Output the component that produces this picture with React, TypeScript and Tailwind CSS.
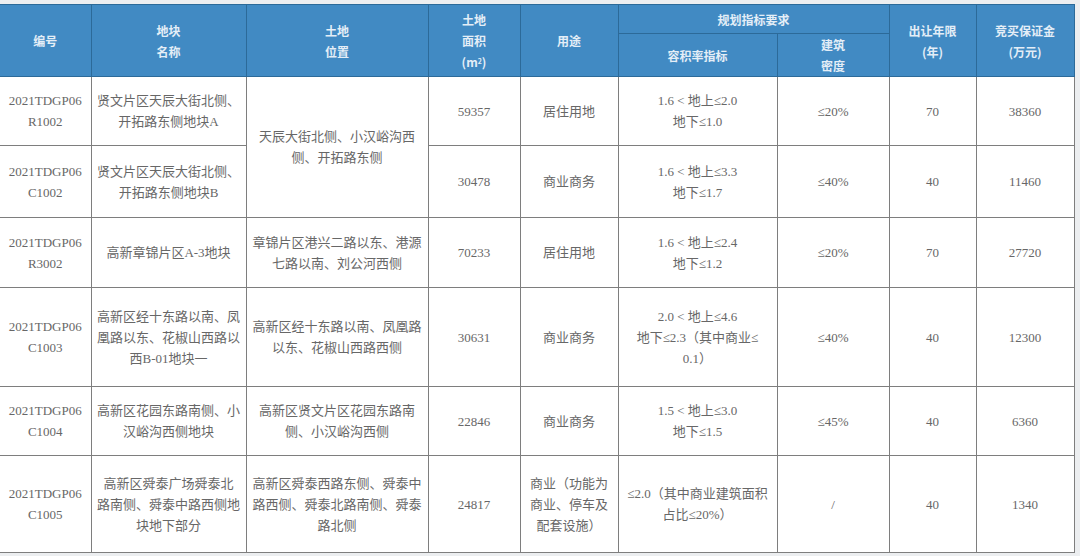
import React from "react"

type Row = {
    code: string[]
    name: string[]
    location?: string[]
    locationSpan?: number
    area: string
    use: string[]
    far: string[]
    density: string
    years: string
    deposit: string
    height: string
}

const ROWS: Row[] = [
    {
        code: ["2021TDGP06", "R1002"],
        name: ["贤文片区天辰大街北侧、", "开拓路东侧地块A"],
        location: ["天辰大街北侧、小汉峪沟西", "侧、开拓路东侧"],
        locationSpan: 2,
        area: "59357",
        use: ["居住用地"],
        far: ["1.6 < 地上≤2.0", "地下≤1.0"],
        density: "≤20%",
        years: "70",
        deposit: "38360",
        height: "h-[69px]",
    },
    {
        code: ["2021TDGP06", "C1002"],
        name: ["贤文片区天辰大街北侧、", "开拓路东侧地块B"],
        area: "30478",
        use: ["商业商务"],
        far: ["1.6 < 地上≤3.3", "地下≤1.7"],
        density: "≤40%",
        years: "40",
        deposit: "11460",
        height: "h-[72px]",
    },
    {
        code: ["2021TDGP06", "R3002"],
        name: ["高新章锦片区A-3地块"],
        location: ["章锦片区港兴二路以东、港源", "七路以南、刘公河西侧"],
        area: "70233",
        use: ["居住用地"],
        far: ["1.6 < 地上≤2.4", "地下≤1.2"],
        density: "≤20%",
        years: "70",
        deposit: "27720",
        height: "h-[70px]",
    },
    {
        code: ["2021TDGP06", "C1003"],
        name: ["高新区经十东路以南、凤", "凰路以东、花椒山西路以", "西B-01地块一"],
        location: ["高新区经十东路以南、凤凰路", "以东、花椒山西路西侧"],
        area: "30631",
        use: ["商业商务"],
        far: ["2.0 < 地上≤4.6", "地下≤2.3（其中商业≤", "0.1）"],
        density: "≤40%",
        years: "40",
        deposit: "12300",
        height: "h-[99px]",
    },
    {
        code: ["2021TDGP06", "C1004"],
        name: ["高新区花园东路南侧、小", "汉峪沟西侧地块"],
        location: ["高新区贤文片区花园东路南", "侧、小汉峪沟西侧"],
        area: "22846",
        use: ["商业商务"],
        far: ["1.5 < 地上≤3.0", "地下≤1.5"],
        density: "≤45%",
        years: "40",
        deposit: "6360",
        height: "h-[69px]",
    },
    {
        code: ["2021TDGP06", "C1005"],
        name: ["高新区舜泰广场舜泰北", "路南侧、舜泰中路西侧地", "块地下部分"],
        location: ["高新区舜泰西路东侧、舜泰中", "路西侧、舜泰北路南侧、舜泰", "路北侧"],
        area: "24817",
        use: ["商业（功能为", "商业、停车及", "配套设施）"],
        far: ["≤2.0（其中商业建筑面积", "占比≤20%）"],
        density: "/",
        years: "40",
        deposit: "1340",
        height: "h-[97px]",
    },
]

const Lines = ({ lines }: { lines: string[] }) => (
    <>
        {lines.map((l) => (
            <div key={l} className="whitespace-nowrap">
                {l}
            </div>
        ))}
    </>
)

const th = "border border-[#2c6a99] px-1 text-center align-middle font-bold"
const td = "border border-[#7e7e7e] px-1 text-center align-middle"

export default function App() {
    return (
        <div className="w-[1080px] h-[556px] overflow-hidden bg-[#eceef0] pt-[4px]">
            <table
                className="w-[1074px] table-fixed border-collapse bg-white text-[13px] leading-[21px] text-[#676767]"
                style={{ fontFamily: '"Liberation Serif", "Noto Sans CJK SC", serif' }}
            >
                <colgroup>
                    <col className="w-[91px]" />
                    <col className="w-[155px]" />
                    <col className="w-[182px]" />
                    <col className="w-[92px]" />
                    <col className="w-[98px]" />
                    <col className="w-[159px]" />
                    <col className="w-[112px]" />
                    <col className="w-[87px]" />
                    <col className="w-[98px]" />
                </colgroup>

                {/* Header */}
                <thead
                    className="bg-[#418ac3] text-[12px] leading-[21px] text-[#e4eef7]"
                    style={{ fontFamily: '"Noto Sans CJK SC", sans-serif' }}
                >
                    <tr className="h-[29px]">
                        <th rowSpan={2} className={`${th} border-l-0`}>编号</th>
                        <th rowSpan={2} className={th}>地块<br />名称</th>
                        <th rowSpan={2} className={th}>土地<br />位置</th>
                        <th rowSpan={2} className={th}>
                            土地<br />面积<br />(m<sup className="text-[7px]">2</sup>)
                        </th>
                        <th rowSpan={2} className={th}>用途</th>
                        <th colSpan={2} className={th}>规划指标要求</th>
                        <th rowSpan={2} className={th}>出让年限<br />(年)</th>
                        <th rowSpan={2} className={th}>竞买保证金<br />(万元)</th>
                    </tr>
                    <tr className="h-[43px]">
                        <th className={th}>容积率指标</th>
                        <th className={th}>建筑<br />密度</th>
                    </tr>
                </thead>

                {/* Body */}
                <tbody>
                    {ROWS.map((r) => (
                        <tr key={r.code[1]} className={r.height}>
                            <td className={`${td} border-l-0`}><Lines lines={r.code} /></td>
                            <td className={td}><Lines lines={r.name} /></td>
                            {r.location && (
                                <td rowSpan={r.locationSpan ?? 1} className={td}>
                                    <Lines lines={r.location} />
                                </td>
                            )}
                            <td className={td}>{r.area}</td>
                            <td className={td}><Lines lines={r.use} /></td>
                            <td className={td}><Lines lines={r.far} /></td>
                            <td className={td}>{r.density}</td>
                            <td className={td}>{r.years}</td>
                            <td className={td}>{r.deposit}</td>
                        </tr>
                    ))}
                </tbody>
            </table>
        </div>
    )
}
